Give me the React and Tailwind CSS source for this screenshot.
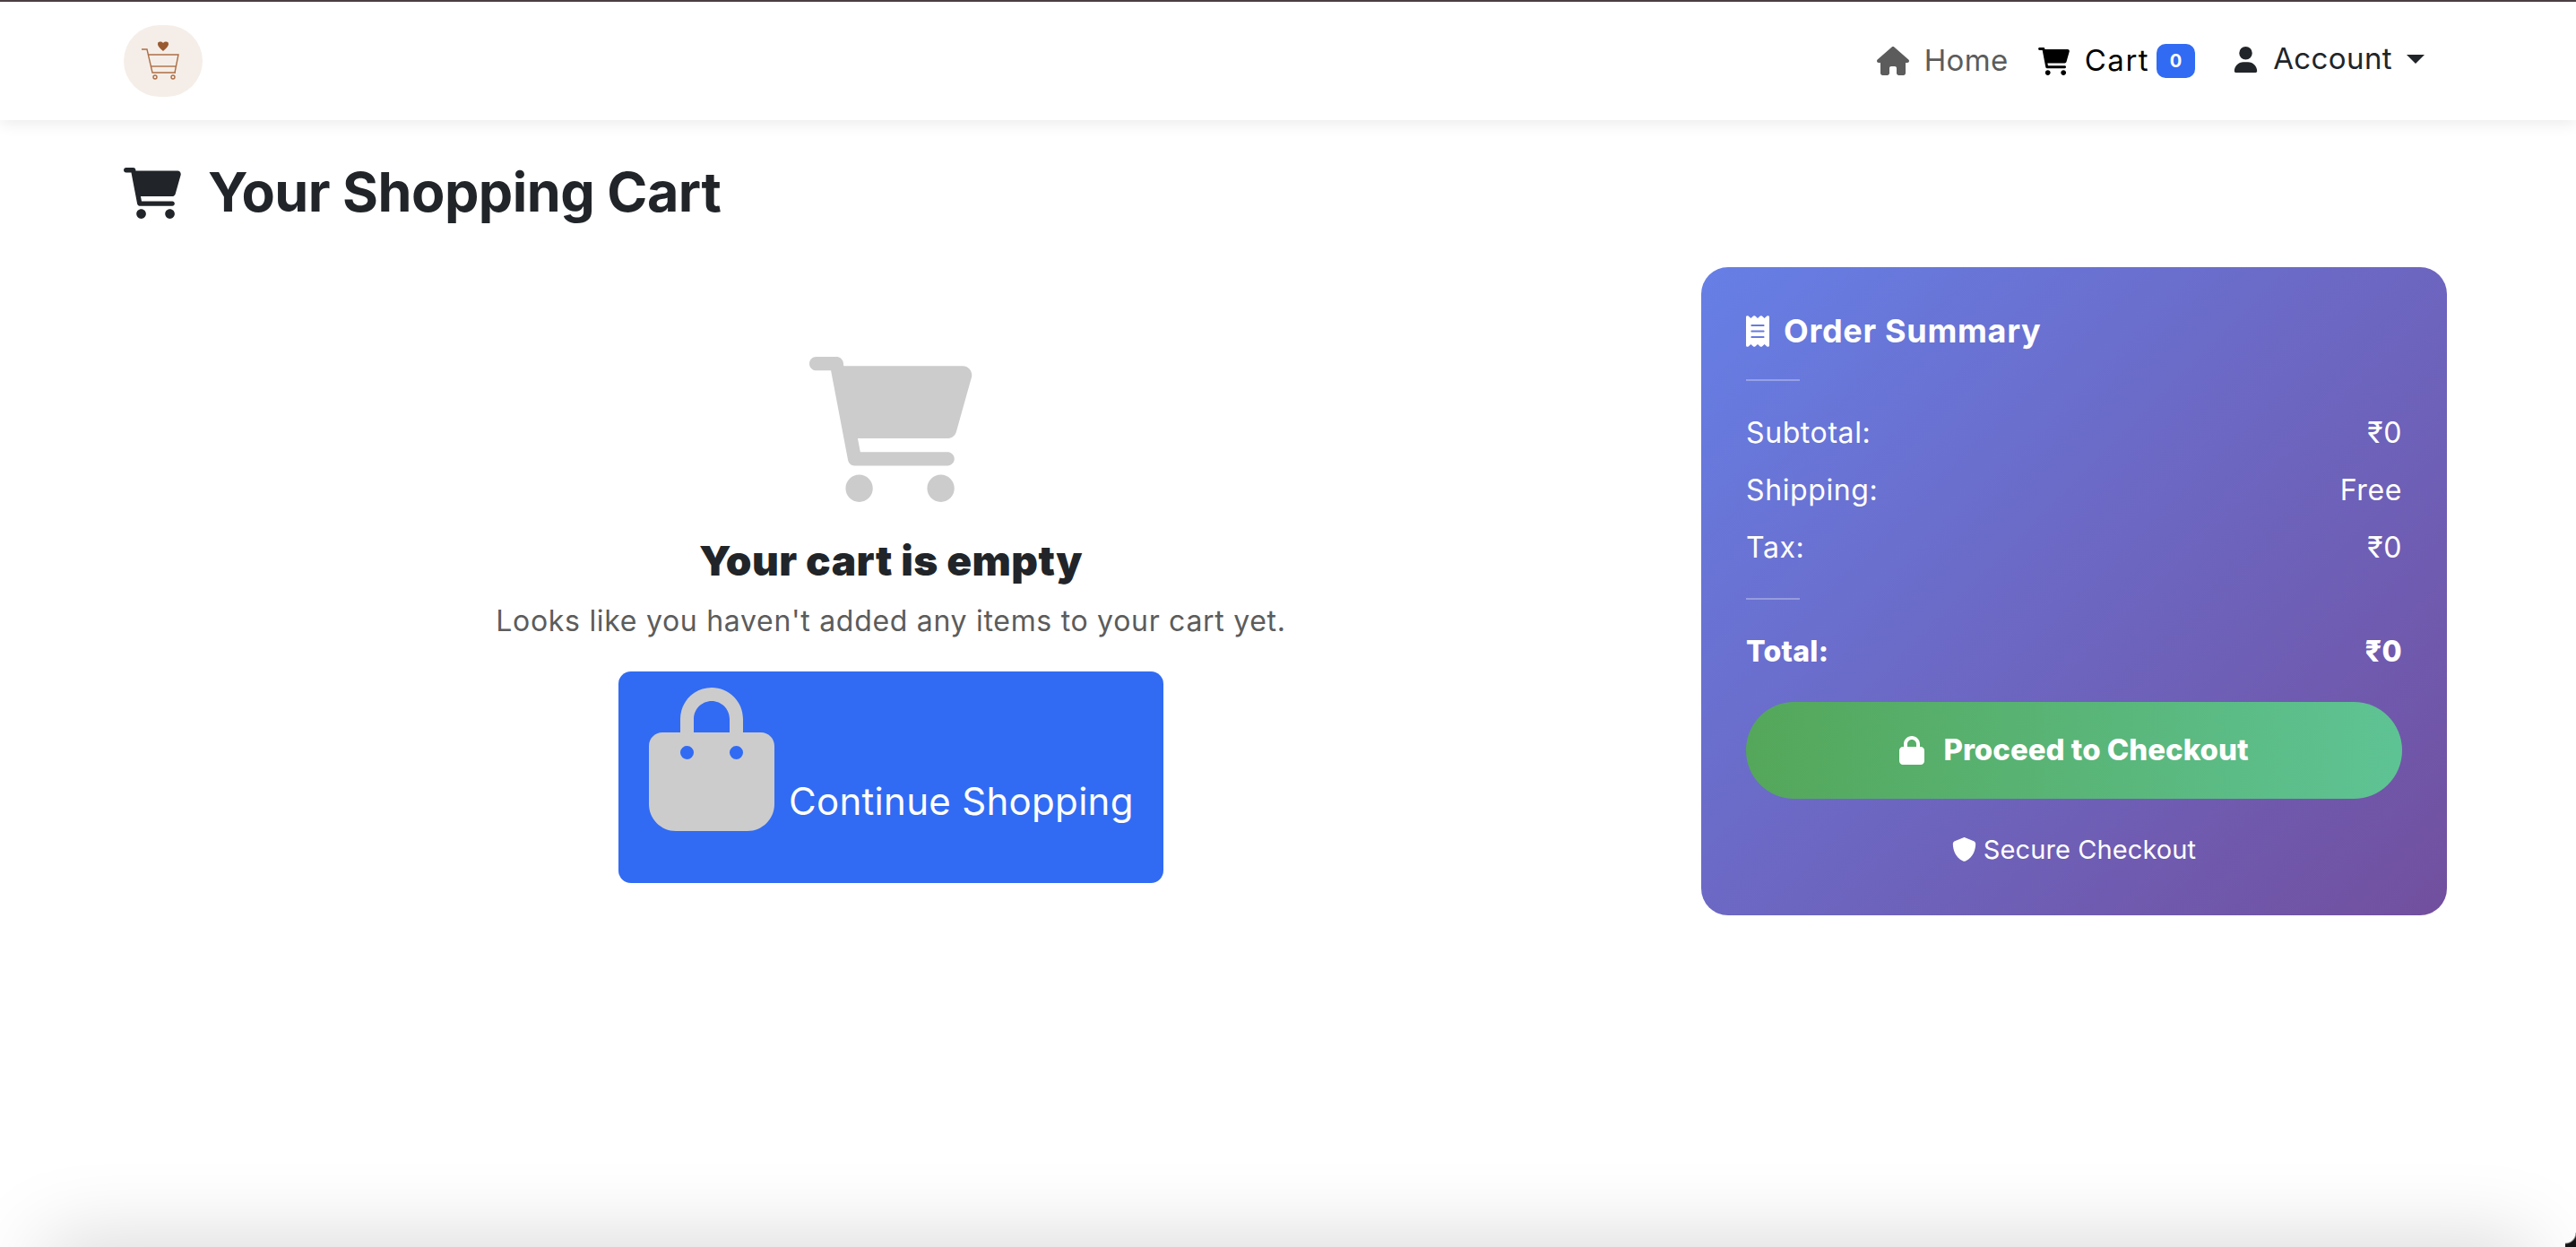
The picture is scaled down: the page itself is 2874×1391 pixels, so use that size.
import React from "react";
import { FaHouse, FaUser, FaReceipt, FaLock, FaShield, FaBagShopping } from "react-icons/fa6";

function Cart({ className }) {
  return (
    <svg viewBox="0 0 576 512" fill="currentColor" className={className}>
      <path d="M96 0C107.5 0 117.4 8.19 119.6 19.51L121.1 32H541.8C562.1 32 578.3 52.25 572.6 72.66L518.6 264.7C514.7 278.5 502.1 288 487.8 288H170.7L179.9 336H488C501.3 336 512 346.7 512 360C512 373.3 501.3 384 488 384H159.1C148.5 384 138.6 375.8 136.4 364.5L76.14 48H24C10.75 48 0 37.25 0 24C0 10.75 10.75 0 24 0H96zM128 464C128 437.5 149.5 416 176 416C202.5 416 224 437.5 224 464C224 490.5 202.5 512 176 512C149.5 512 128 490.5 128 464zM512 464C512 490.5 490.5 512 464 512C437.5 512 416 490.5 416 464C416 437.5 437.5 416 464 416C490.5 416 512 437.5 512 464z" />
    </svg>
  );
}

function Logo() {
  return (
    <div className="w-[88px] h-[80px] rounded-full bg-[#f5eee8] flex items-center justify-center">
      <svg width="46" height="44" viewBox="0 0 46 44" fill="none" stroke="#ad6f45" strokeWidth="1.4" className="-translate-x-[3px]">
        <path d="M2 9h6l6 26h26" />
        <path d="M10 15h33l-4 20" />
        <path d="M12 28h28" />
        <circle cx="17" cy="40" r="2" />
        <circle cx="37" cy="40" r="2" />
        <path d="M26 11c-3-3-6-5-6-8 0-3 4-3 6-1 2-2 6-2 6 1 0 3-3 5-6 8z" fill="#9a5a30" stroke="none" />
      </svg>
    </div>
  );
}

function Row({ label, value, bold }) {
  return (
    <div className={`flex justify-between text-[32px] leading-[45px] ${bold ? "font-extrabold tracking-[0.3px]" : "tracking-[0.6px]"}`}>
      <span>{label}</span>
      <span>{value}</span>
    </div>
  );
}

export default function App() {
  return (
    <div className="relative h-screen overflow-hidden bg-white text-[#212529] font-['Inter','Liberation_Sans',sans-serif]">
      <div className="h-[2px] bg-[#4d4045]"></div>
      <nav className="h-[132px] flex items-center justify-between pl-[138px] pr-[169px] bg-white shadow-[0_4px_16px_rgba(0,0,0,0.08)]">
        <Logo />
        <div className="flex items-center text-[33px] tracking-[0.4px]">
          <div className="flex items-center text-[#5c5c5c] gap-[17px]">
            <FaHouse className="w-[36px] h-[32px]" />
            <span>Home</span>
          </div>
          <div className="flex items-center text-black gap-[17px] ml-[33px]">
            <Cart className="w-[35px] h-[31px]" />
            <span className="tracking-[1.5px]">Cart</span>
          </div>
          <span className="ml-[8px] w-[43px] h-[38px] rounded-[10px] bg-[#316bf3] text-white text-[20px] font-bold flex items-center justify-center">0</span>
          <div className="flex items-center gap-[16px] ml-[42px] -translate-y-[2px]">
            <FaUser className="text-[29px]" />
            <span>Account</span>
            <span className="w-0 h-0 border-x-[10px] border-t-[10px] border-x-transparent border-t-[#212529]"></span>
          </div>
        </div>
      </nav>
      <main className="pl-[138px] pr-[144px]">
        <h1 className="flex items-center gap-[30px] h-[164px] pt-[31px] pb-[33px] text-[61px] tracking-[-0.5px] font-[650]">
          <Cart className="w-[64px] h-[57px]" />
          <span>Your Shopping Cart</span>
        </h1>
        <div className="flex gap-[48px] items-start">
          <section className="flex-1 flex flex-col items-center pt-[100px]">
            <Cart className="w-[182px] h-[162px] text-[#cccccc]" />
            <h2 className="mt-[35px] text-[46px] tracking-[0.4px] font-black leading-[60px]">Your cart is empty</h2>
            <p className="mt-[16px] text-[32px] tracking-[0.7px] leading-[44px] text-[#5c5c5c]">Looks like you haven't added any items to your cart yet.</p>
            <div className="mt-[34px] w-[608px] h-[236px] rounded-[14px] bg-[#316bf3] text-white flex items-start pl-[34px] pt-[18px] gap-[16px]">
              <FaBagShopping className="w-[140px] h-[160px] text-[#cccccc]" />
              <span className="text-[42px] tracking-[0.3px] mt-[97px] leading-[60px] whitespace-nowrap">Continue Shopping</span>
            </div>
          </section>
          <aside className="w-[832px] h-[723px] rounded-[30px] p-[50px] text-white bg-[linear-gradient(135deg,#667fe6,#724f9e)]">
            <div className="flex items-center gap-[16px] text-[36px] tracking-[0.7px] font-bold leading-[50px] mt-[-4px]">
              <FaReceipt className="w-[26px] h-[35px]" />
              <span>Order Summary</span>
            </div>
            <div className="w-[60px] h-[2px] bg-white/30 mt-[29px] mb-[35px]"></div>
            <div className="flex flex-col gap-[19px]">
              <Row label="Subtotal:" value="₹0" />
              <Row label="Shipping:" value="Free" />
              <Row label="Tax:" value="₹0" />
            </div>
            <div className="w-[60px] h-[2px] bg-white/30 mt-[34px] mb-[35px]"></div>
            <Row label="Total:" value="₹0" bold />
            <div className="mt-[34px] h-[108px] rounded-full bg-[linear-gradient(90deg,#54a75a,#5ec394)] flex items-center justify-center gap-[21px] text-[33px] font-extrabold">
              <FaLock className="w-[28px] h-[32px]" />
              <span>Proceed to Checkout</span>
            </div>
            <div className="mt-[35px] flex items-center justify-center gap-[8px] text-[29px] tracking-[0.1px]">
              <FaShield className="text-[27px]" />
              <span>Secure Checkout</span>
            </div>
          </aside>
        </div>
      </main>
      <div className="absolute left-[70px] right-[70px] top-[1405px] h-[40px] shadow-[0_0_90px_20px_rgba(0,0,0,0.17)]"></div>
      <div className="absolute right-0 bottom-0 w-[12px] h-[16px] bg-[radial-gradient(circle_at_top_left,transparent_11px,#151515_13px)]"></div>
    </div>
  );
}
